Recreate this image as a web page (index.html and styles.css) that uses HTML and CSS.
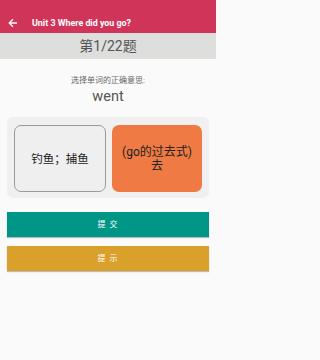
FILE: index.html
```html
<!DOCTYPE html>
<html>
<head>
<meta charset="utf-8">
<link rel="stylesheet" href="styles.css">
</head>
<body>
<header class="appbar">
  <svg class="back" width="10" height="10" viewBox="0 0 10 10"><path d="M9 5H1.5M5 1.2L1.2 5 5 8.8" fill="none" stroke="#fff" stroke-width="1.3"/></svg>
  <span class="title">Unit 3 Where did you go?</span>
</header>
<div class="band">第1/22题</div>
<div class="prompt">
  <div class="hint">选择单词的正确意思:</div>
  <div class="word">went</div>
</div>
<div class="options">
  <div class="opt opt-plain">钓鱼；捕鱼</div>
  <div class="opt opt-selected">(go的过去式)<br>去</div>
</div>
<div class="btn btn-submit">提 交</div>
<div class="btn btn-hint">提 示</div>
</body>
</html>
```
FILE: styles.css
```css
html, body { margin: 0; padding: 0; }
body {
  background: #fafafa;
  font-family: Roboto, "Noto Sans CJK SC", sans-serif;
  width: 216px;
  height: 360px;
  overflow: hidden;
}
.appbar {
  height: 33px;
  box-sizing: border-box;
  padding-top: 13px;
  background: #d13459;
  display: flex;
  align-items: center;
  color: #fff;
}
.appbar .back { margin-left: 8px; margin-right: 14px; }
.appbar .title { font-size: 8.9px; font-weight: 700; line-height: 20px; }
.band {
  height: 26px;
  background: #dededd;
  color: #555;
  font-size: 14px;
  line-height: 26px;
  text-align: center;
}
.prompt { text-align: center; padding-top: 15px; }
.hint { font-size: 8px; color: #666; line-height: 13px; }
.word { font-size: 14.5px; color: #555; line-height: 20px; }
.options {
  margin: 10px 7px 0;
  padding: 8px 7px 6px;
  background: #f0f0f0;
  border-radius: 6px;
  display: flex;
  gap: 6px;
}
.opt {
  flex: 1;
  height: 67px;
  box-sizing: border-box;
  border-radius: 7px;
  display: flex;
  align-items: center;
  justify-content: center;
  text-align: center;
  font-size: 12px;
  line-height: 14px;
  color: #222;
}
.opt-plain { background: #efefef; border: 1px solid #9a9a9a; font-size: 11.5px; }
.opt-selected { background: #ef7a44; }
.btn {
  margin: 0 7px;
  height: 25px;
  line-height: 25px;
  text-align: center;
  color: #fff;
  font-size: 8px;
  letter-spacing: 1px;
  box-shadow: 0 1px 1px rgba(0,0,0,0.25);
}
.btn-submit { background: #009687; margin-top: 14px; }
.btn-hint { background: #d9a02c; margin-top: 9px; }
```
